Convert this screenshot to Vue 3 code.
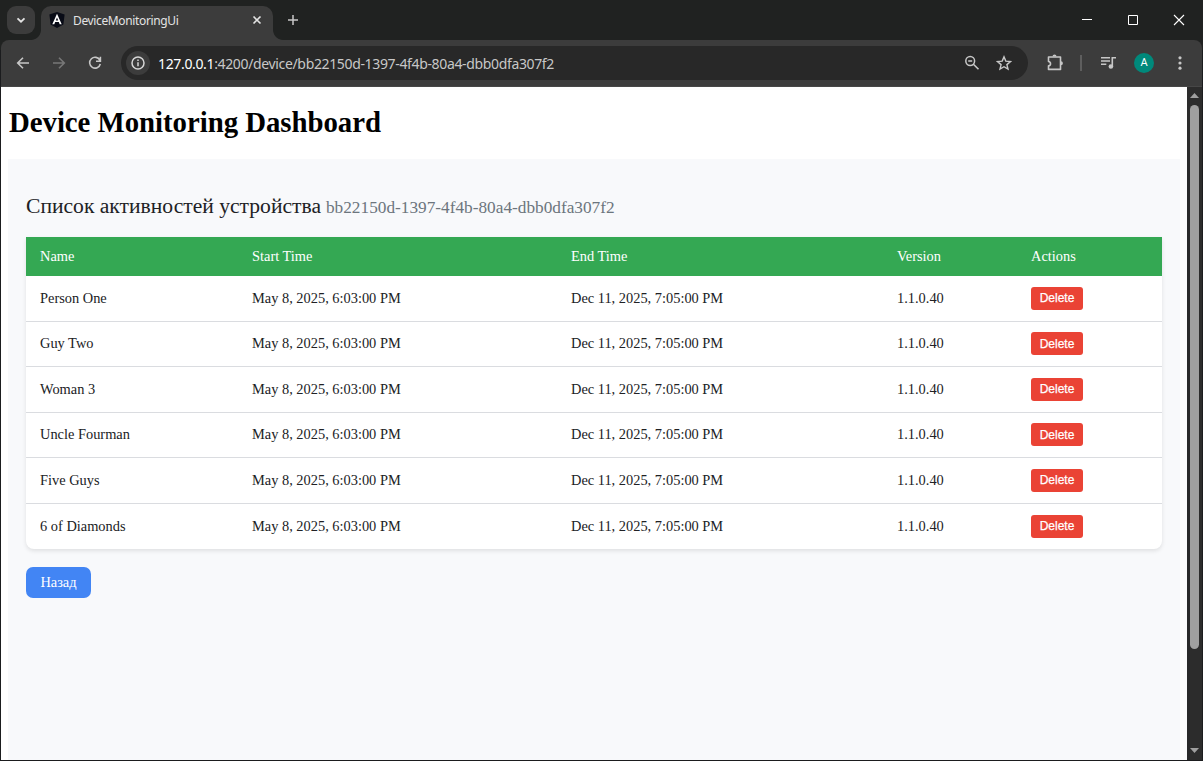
<script setup>
const columns = ['Name', 'Start Time', 'End Time', 'Version', 'Actions']
const names = ['Person One', 'Guy Two', 'Woman 3', 'Uncle Fourman', 'Five Guys', '6 of Diamonds']
const rows = names.map((name) => ({
  name,
  start: 'May 8, 2025, 6:03:00 PM',
  end: 'Dec 11, 2025, 7:05:00 PM',
  version: '1.1.0.40',
}))
const deviceId = 'bb22150d-1397-4f4b-80a4-dbb0dfa307f2'
</script>

<template>
  <div class="window">
    <header class="titlebar">
      <div class="tab-search">
        <svg width="28" height="28" viewBox="0 0 28 28"><path d="M10.5 12.3l3.5 3.4 3.5-3.4" fill="none" stroke="#e3e3e3" stroke-width="1.8" /></svg>
      </div>
      <div class="tab">
        <svg class="favicon" width="16" height="16" viewBox="0 0 16 16">
          <path d="M8 0l7.6 2.6-1.2 10L8 16l-6.4-3.4L.4 2.6z" fill="#080b16" />
          <path d="M8 1.8L3.3 12.3h2l.9-2.3h3.6l.9 2.3h2zM8 5.4l1.2 3H6.8z" fill="#fff" fill-rule="evenodd" />
        </svg>
        <span class="tab-title">DeviceMonitoringUi</span>
        <svg class="tab-close" width="16" height="16" viewBox="0 0 16 16"><path d="M4.5 4.5l7 7m0-7l-7 7" stroke="#e3e3e3" stroke-width="1.6" /></svg>
      </div>
      <svg class="new-tab" width="16" height="16" viewBox="0 0 16 16"><path d="M8 3v10M3 8h10" stroke="#c7c7c7" stroke-width="1.5" /></svg>
      <div class="controls">
        <svg width="46" height="40" viewBox="0 0 46 40"><path d="M18 19.5h10" stroke="#fff" /></svg>
        <svg width="46" height="40" viewBox="0 0 46 40"><path d="M18.5 15.5h9v9h-9z" fill="none" stroke="#fff" /></svg>
        <svg width="46" height="40" viewBox="0 0 46 40"><path d="M18 15l10 10m0-10L18 25" stroke="#fff" stroke-width="1.1" /></svg>
      </div>
    </header>

    <nav class="toolbar">
      <svg class="nav-icon" width="16" height="16" viewBox="0 0 16 16"><path d="M14 8H3M8 2.7L2.7 8 8 13.3" fill="none" stroke="#c7c7c7" stroke-width="1.6" /></svg>
      <svg class="nav-icon" width="16" height="16" viewBox="0 0 16 16"><path d="M2 8h11M8 2.7L13.3 8 8 13.3" fill="none" stroke="#777" stroke-width="1.6" /></svg>
      <svg class="nav-icon" width="16" height="16" viewBox="0 0 16 16">
        <path d="M12.9 5.3A5.4 5.4 0 1 0 13.3 9M13.4 1.8v4.4H9" fill="none" stroke="#c7c7c7" stroke-width="1.6" />
      </svg>
      <div class="omnibox">
        <span class="site-info">
          <svg width="16" height="16" viewBox="0 0 16 16">
            <circle cx="8" cy="8" r="6" fill="none" stroke="#d6d6d6" stroke-width="1.5" />
            <path d="M8 7.2v4M8 4.6v1.5" stroke="#d6d6d6" stroke-width="1.5" />
          </svg>
        </span>
        <span class="url"><b>127.0.0.1</b>:4200/device/{{ deviceId }}</span>
        <svg class="lens" width="16" height="16" viewBox="0 0 16 16">
          <circle cx="6.2" cy="6" r="4.4" fill="none" stroke="#c7c7c7" stroke-width="1.5" />
          <path d="M4.2 6h4M9.4 9.2l5.1 5.1" stroke="#c7c7c7" stroke-width="1.6" />
        </svg>
        <svg class="star" width="16" height="16" viewBox="0 0 16 16">
          <path d="M8 1.9l1.8 4.2 4.7.4-3.6 3.1 1.1 4.5L8 11.7l-4 2.4 1.1-4.5-3.6-3.1 4.7-.4z" fill="none" stroke="#c7c7c7" stroke-width="1.4" />
        </svg>
      </div>
      <svg class="puzzle" width="18" height="18" viewBox="0 0 18 18">
        <path d="M2.5 3h12v12.4h-12v-3.5c2.7-.4 2.7-4 0-4.4z" fill="none" stroke="#c7c7c7" stroke-width="1.6" stroke-linejoin="round" />
        <path d="M6.5 2.6a2 2 0 0 1 4 0zM14.9 7.2a2 2 0 0 1 0 4z" fill="#c7c7c7" />
      </svg>
      <span class="divider"></span>
      <svg class="media" width="16" height="16" viewBox="0 0 16 16">
        <path d="M1 2.8h9M1 6h9M1 9.2h5.3M12.3 11.5V2.8H16" fill="none" stroke="#c7c7c7" stroke-width="1.6" />
        <circle cx="10.9" cy="11.5" r="2.3" fill="#c7c7c7" />
      </svg>
      <span class="avatar">A</span>
      <svg class="more" width="16" height="16" viewBox="0 0 16 16" fill="#c7c7c7">
        <circle cx="8" cy="2.8" r="1.6" /><circle cx="8" cy="8" r="1.6" /><circle cx="8" cy="13.2" r="1.6" />
      </svg>
    </nav>

    <div class="viewport">
      <div class="page">
        <h1>Device Monitoring Dashboard</h1>
        <main>
          <h2><span>Список активностей устройства</span><small>{{ deviceId }}</small></h2>
          <table>
            <colgroup><col class="c1" /><col class="c2" /><col class="c3" /><col class="c4" /><col class="c5" /></colgroup>
            <thead>
              <tr><th v-for="c in columns" :key="c">{{ c }}</th></tr>
            </thead>
            <tbody>
              <tr v-for="r in rows" :key="r.name">
                <td>{{ r.name }}</td>
                <td>{{ r.start }}</td>
                <td>{{ r.end }}</td>
                <td>{{ r.version }}</td>
                <td><button class="delete">Delete</button></td>
              </tr>
            </tbody>
          </table>
          <button class="back">Назад</button>
        </main>
      </div>
      <div class="scrollbar">
        <svg width="15" height="18" viewBox="0 0 15 18"><path d="M3 11L7.5 6l4.5 5z" fill="#9f9f9f" /></svg>
        <div class="thumb"></div>
        <svg class="down" width="15" height="18" viewBox="0 0 15 18"><path d="M3 6l4.5 5L12 6z" fill="#9f9f9f" /></svg>
      </div>
    </div>
  </div>
</template>

<style>
body { margin: 0; overflow: hidden; background: #1b1b1d; }
</style>

<style scoped>
* { box-sizing: border-box; }
svg { display: block; flex: none; }
.window { width: 1203px; height: 761px; display: flex; flex-direction: column; background: linear-gradient(#202221 50px, #1b1c1e 50px); padding: 0 1px 1px; overflow: hidden; font-family: "Noto Sans", sans-serif; }
.titlebar { height: 40px; margin: 0 -1px; padding-left: 7px; flex: none; display: flex; background: #202221; }
.tab-search { width: 28px; height: 28px; margin-top: 6px; border-radius: 9px; background: #3c3c3c; }
.tab { position: relative; width: 232px; height: 34px; margin: 6px 0 0 6px; padding: 0 8px; display: flex; align-items: center; background: #3c3c3c; border-radius: 10px 10px 0 0; }
.tab::before, .tab::after { content: ""; position: absolute; bottom: 0; width: 10px; height: 10px; }
.tab::before { left: -10px; background: radial-gradient(circle at 0 0, transparent 9.5px, #3c3c3c 10.3px); }
.tab::after { right: -10px; background: radial-gradient(circle at 100% 0, transparent 9.5px, #3c3c3c 10.3px); }
.favicon { margin-top: -6px; }
.tab-title { margin: -5px 0 0 8px; font-size: 12px; line-height: 16px; color: #e3e3e3; letter-spacing: -0.36px; white-space: nowrap; }
.tab-close { margin: -6px 0 0 auto; }
.new-tab { margin: 12px 0 0 12px; }
.controls { display: flex; margin-left: auto; margin-right: 1px; }
.toolbar { height: 47px; flex: none; padding-left: 14px; display: flex; align-items: center; background: #3c3c3c; border-bottom: 1px solid #474747; border-radius: 8px 8px 0 0; }
.nav-icon { margin-right: 20px; }
.omnibox { width: 907px; height: 34px; margin-left: -2px; padding: 0 16px 0 5px; border-radius: 17px; background: #282828; display: flex; align-items: center; }
.site-info { width: 24px; height: 24px; border-radius: 50%; background: #3c3c3c; display: grid; place-items: center; }
.url { margin: 1px 0 0 8px; font-size: 14px; line-height: 20px; letter-spacing: -0.35px; color: #c7c7c7; white-space: nowrap; }
.url b { color: #fff; font-weight: 400; }
.lens { margin-left: auto; }
.star { margin-left: 16px; }
.puzzle { margin-left: 18px; }
.divider { width: 2px; height: 16px; margin-left: 16px; background: #5e5e5e; }
.media { margin-left: 18px; }
.avatar { width: 20px; height: 20px; margin-left: 18px; border-radius: 50%; background: #00897b; color: #fff; font: 400 11px/20px Roboto, sans-serif; text-align: center; }
.more { margin-left: 18px; }
.viewport { flex: 1; min-height: 0; display: flex; background: #fff; }
.page { flex: 1; padding: 0 7px; font-family: "Liberation Serif", serif; overflow: hidden; }
h1 { margin: 18px 0 20px; height: 34px; padding-left: 1px; font-size: 28.8px; line-height: 34px; letter-spacing: -0.03px; color: #000; white-space: nowrap; }
main { height: 620px; padding: 32px 18px; background: #f8f9fb; color: #212529; }
h2 { margin: 0 0 16px; height: 30px; font-size: 21.6px; line-height: 30px; font-weight: 400; color: #202124; white-space: nowrap; }
small { margin-left: 5px; font-size: 17.28px; color: #6c757d; }
table { width: 1136px; table-layout: fixed; border-collapse: separate; border-spacing: 0; background: #fff; font-size: 14.4px; border-radius: 0 0 8px 8px; box-shadow: 0 2px 4px rgba(0, 0, 0, 0.1); }
.c1 { width: 212px; } .c2 { width: 319px; } .c3 { width: 326px; } .c4 { width: 134px; } .c5 { width: 145px; }
th { height: 39px; padding: 0 0 0 14px; background: #34a853; color: #fff; font-weight: 400; text-align: left; }
td { height: 45.5px; padding: 0 0 0 14px; border-bottom: 1px solid #dadce0; color: #202124; white-space: nowrap; }
tr:last-child td { border-bottom: 0; }
button { display: block; border: 0; color: #fff; }
.delete { width: 52px; height: 23px; padding: 0; border-radius: 3px; background: #ea4335; font: 12px/22px "Liberation Sans", sans-serif; -webkit-text-stroke: 0.25px #fff; }
.back { width: 65px; height: 31px; margin-top: 18px; padding: 0; border-radius: 7px; background: #4285f4; font: 14.4px/31px "Liberation Serif", serif; }
.scrollbar { width: 15px; background: #2c2c2c; display: flex; flex-direction: column; }
.thumb { width: 9px; height: 544px; margin-left: 3px; border-radius: 5px; background: #9f9f9f; }
.down { margin-top: auto; }
</style>
